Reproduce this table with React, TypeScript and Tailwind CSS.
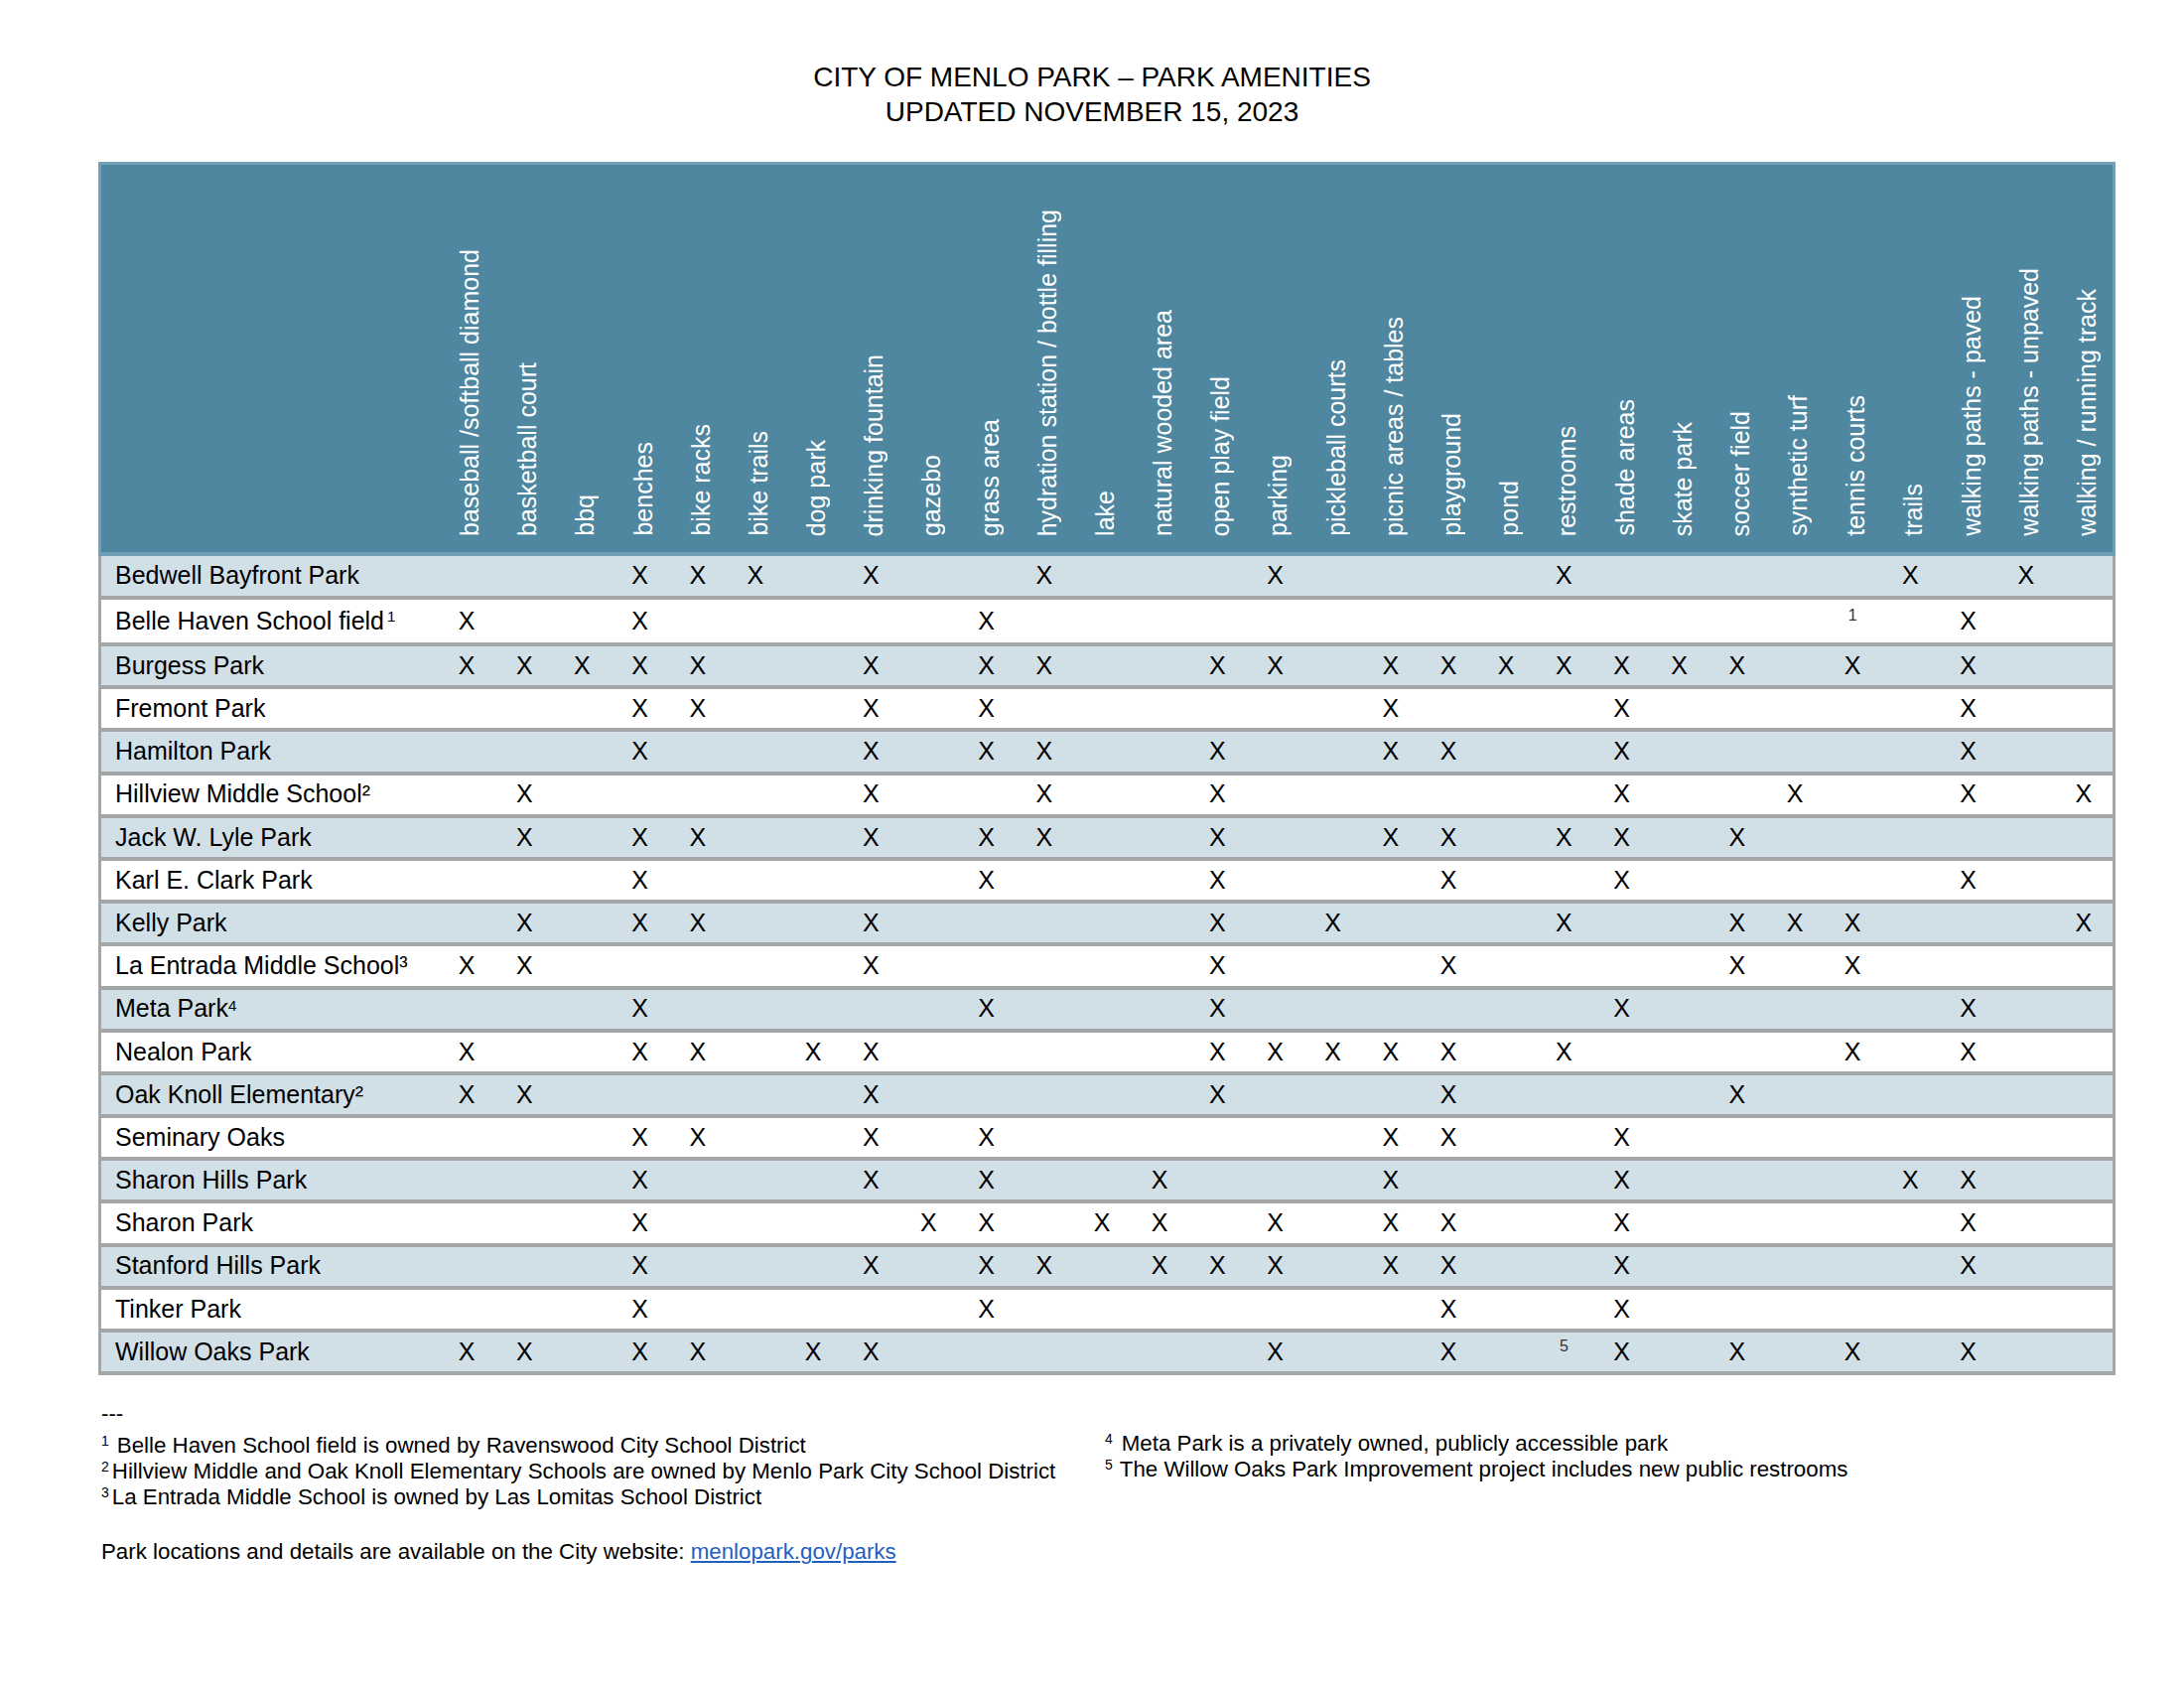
import React from "react";

const AMENITIES = [
  "baseball /softball diamond",
  "basketball court",
  "bbq",
  "benches",
  "bike racks",
  "bike trails",
  "dog park",
  "drinking fountain",
  "gazebo",
  "grass area",
  "hydration station / bottle filling",
  "lake",
  "natural wooded area",
  "open play field",
  "parking",
  "pickleball courts",
  "picnic areas / tables",
  "playground",
  "pond",
  "restrooms",
  "shade areas",
  "skate park",
  "soccer field",
  "synthetic turf",
  "tennis courts",
  "trails",
  "walking paths - paved",
  "walking paths - unpaved",
  "walking / running track",
];

type Row = {
  name: React.ReactNode;
  xs: number[];
  marks?: Record<number, string>;
  h: string;
};

const ROWS: Row[] = [
  { name: "Bedwell Bayfront Park", xs: [3, 4, 5, 7, 10, 14, 19, 25, 27], h: "h-[44px]" },
  {
    name: (
      <>
        Belle Haven School field
        <span className="text-[15px] ml-[3px] self-start mt-[6px]">1</span>
      </>
    ),
    xs: [0, 3, 9, 26],
    marks: { 24: "1" },
    h: "h-[47px]",
  },
  {
    name: "Burgess Park",
    xs: [0, 1, 2, 3, 4, 7, 9, 10, 13, 14, 16, 17, 18, 19, 20, 21, 22, 24, 26],
    h: "h-[43.2px]",
  },
  { name: "Fremont Park", xs: [3, 4, 7, 9, 16, 20, 26], h: "h-[43.2px]" },
  { name: "Hamilton Park", xs: [3, 7, 9, 10, 13, 16, 17, 20, 26], h: "h-[43.2px]" },
  { name: "Hillview Middle School²", xs: [1, 7, 10, 13, 20, 23, 26, 28], h: "h-[43.2px]" },
  { name: "Jack W. Lyle Park", xs: [1, 3, 4, 7, 9, 10, 13, 16, 17, 19, 20, 22], h: "h-[43.2px]" },
  { name: "Karl E. Clark Park", xs: [3, 9, 13, 17, 20, 26], h: "h-[43.2px]" },
  { name: "Kelly Park", xs: [1, 3, 4, 7, 13, 15, 19, 22, 23, 24, 28], h: "h-[43.2px]" },
  { name: "La Entrada Middle School³", xs: [0, 1, 7, 13, 17, 22, 24], h: "h-[43.2px]" },
  {
    name: (
      <>
        Meta Park
        <span className="text-[15px] self-start mt-[5px]">4</span>
      </>
    ),
    xs: [3, 9, 13, 20, 26],
    h: "h-[43.2px]",
  },
  { name: "Nealon Park", xs: [0, 3, 4, 6, 7, 13, 14, 15, 16, 17, 19, 24, 26], h: "h-[43.2px]" },
  { name: "Oak Knoll Elementary²", xs: [0, 1, 7, 13, 17, 22], h: "h-[43.2px]" },
  { name: "Seminary Oaks", xs: [3, 4, 7, 9, 16, 17, 20], h: "h-[43.2px]" },
  { name: "Sharon Hills Park", xs: [3, 7, 9, 12, 16, 20, 25, 26], h: "h-[43.2px]" },
  { name: "Sharon Park", xs: [3, 8, 9, 11, 12, 14, 16, 17, 20, 26], h: "h-[43.2px]" },
  { name: "Stanford Hills Park", xs: [3, 7, 9, 10, 12, 13, 14, 16, 17, 20, 26], h: "h-[43.2px]" },
  { name: "Tinker Park", xs: [3, 9, 17, 20], h: "h-[43.2px]" },
  {
    name: "Willow Oaks Park",
    xs: [0, 1, 3, 4, 6, 7, 14, 17, 20, 22, 24, 26],
    marks: { 19: "5" },
    h: "h-[43.2px]",
  },
];

const FONT = "font-['Liberation_Sans',Arial,sans-serif]";

function HeaderRow() {
  return (
    <div className="grid grid-cols-[339px_repeat(29,minmax(0,1fr))] h-[397px] bg-[#4f87a0] border-t-[3px] border-x-[3px] border-b-4 border-[#70a0b6]">
      <div />
      {AMENITIES.map((a) => (
        <div key={a} className="flex items-end justify-center pb-[16px] pl-[7px]">
          <span className="[writing-mode:vertical-rl] rotate-180 whitespace-nowrap text-white text-[25px] leading-[29px]">
            {a}
          </span>
        </div>
      ))}
    </div>
  );
}

function DataRow({ row, idx }: { row: Row; idx: number }) {
  const shaded = idx % 2 === 0;
  return (
    <div
      className={`grid grid-cols-[339px_repeat(29,minmax(0,1fr))] ${row.h} border-x-[3px] border-b-4 border-[#a3a5a7] ${
        shaded ? "bg-[#d1dfe7]" : "bg-white"
      }`}
    >
      <div className="flex items-center pl-[14px] text-[25px] text-black whitespace-nowrap">{row.name}</div>
      {AMENITIES.map((_, c) => (
        <div key={c} className="flex items-center justify-center text-[25px] text-black">
          {row.xs.includes(c) ? "X" : row.marks && row.marks[c] ? (
            <span className="text-[16px] -translate-y-[6px] text-[#333]">{row.marks[c]}</span>
          ) : null}
        </div>
      ))}
    </div>
  );
}

export default function App() {
  return (
    <div className={`w-[2200px] h-[1700px] bg-white ${FONT} text-black`}>
      <div className="pt-[60px] text-center text-[28px] leading-[35px]">
        <div>CITY OF MENLO PARK – PARK AMENITIES</div>
        <div>UPDATED NOVEMBER 15, 2023</div>
      </div>

      <div className="ml-[99px] w-[2032px] mt-[33px]">
        <HeaderRow />
        {ROWS.map((r, i) => (
          <DataRow key={i} row={r} idx={i} />
        ))}

        <div className="pl-[3px] mt-[26px] text-[22.3px] leading-[26px]">
          <div>---</div>
          <div className="flex mt-[6px]">
            <div className="w-[1011px]">
              <div>
                <sup className="text-[14px] mr-[8px]">1</sup>Belle Haven School field is owned by Ravenswood City School District
              </div>
              <div>
                <sup className="text-[14px] mr-[3px]">2</sup>Hillview Middle and Oak Knoll Elementary Schools are owned by Menlo Park City School District
              </div>
              <div>
                <sup className="text-[14px] mr-[3px]">3</sup>La Entrada Middle School is owned by Las Lomitas School District
              </div>
            </div>
            <div className="-mt-[2px]">
              <div>
                <sup className="text-[14px] mr-[9px]">4</sup>Meta Park is a privately owned, publicly accessible park
              </div>
              <div>
                <sup className="text-[14px] mr-[7px]">5</sup>The Willow Oaks Park Improvement project includes new public restrooms
              </div>
            </div>
          </div>
          <div className="mt-[29px]">
            Park locations and details are available on the City website:{" "}
            <span className="text-[#1f5fbf] underline">menlopark.gov/parks</span>
          </div>
        </div>
      </div>
    </div>
  );
}
